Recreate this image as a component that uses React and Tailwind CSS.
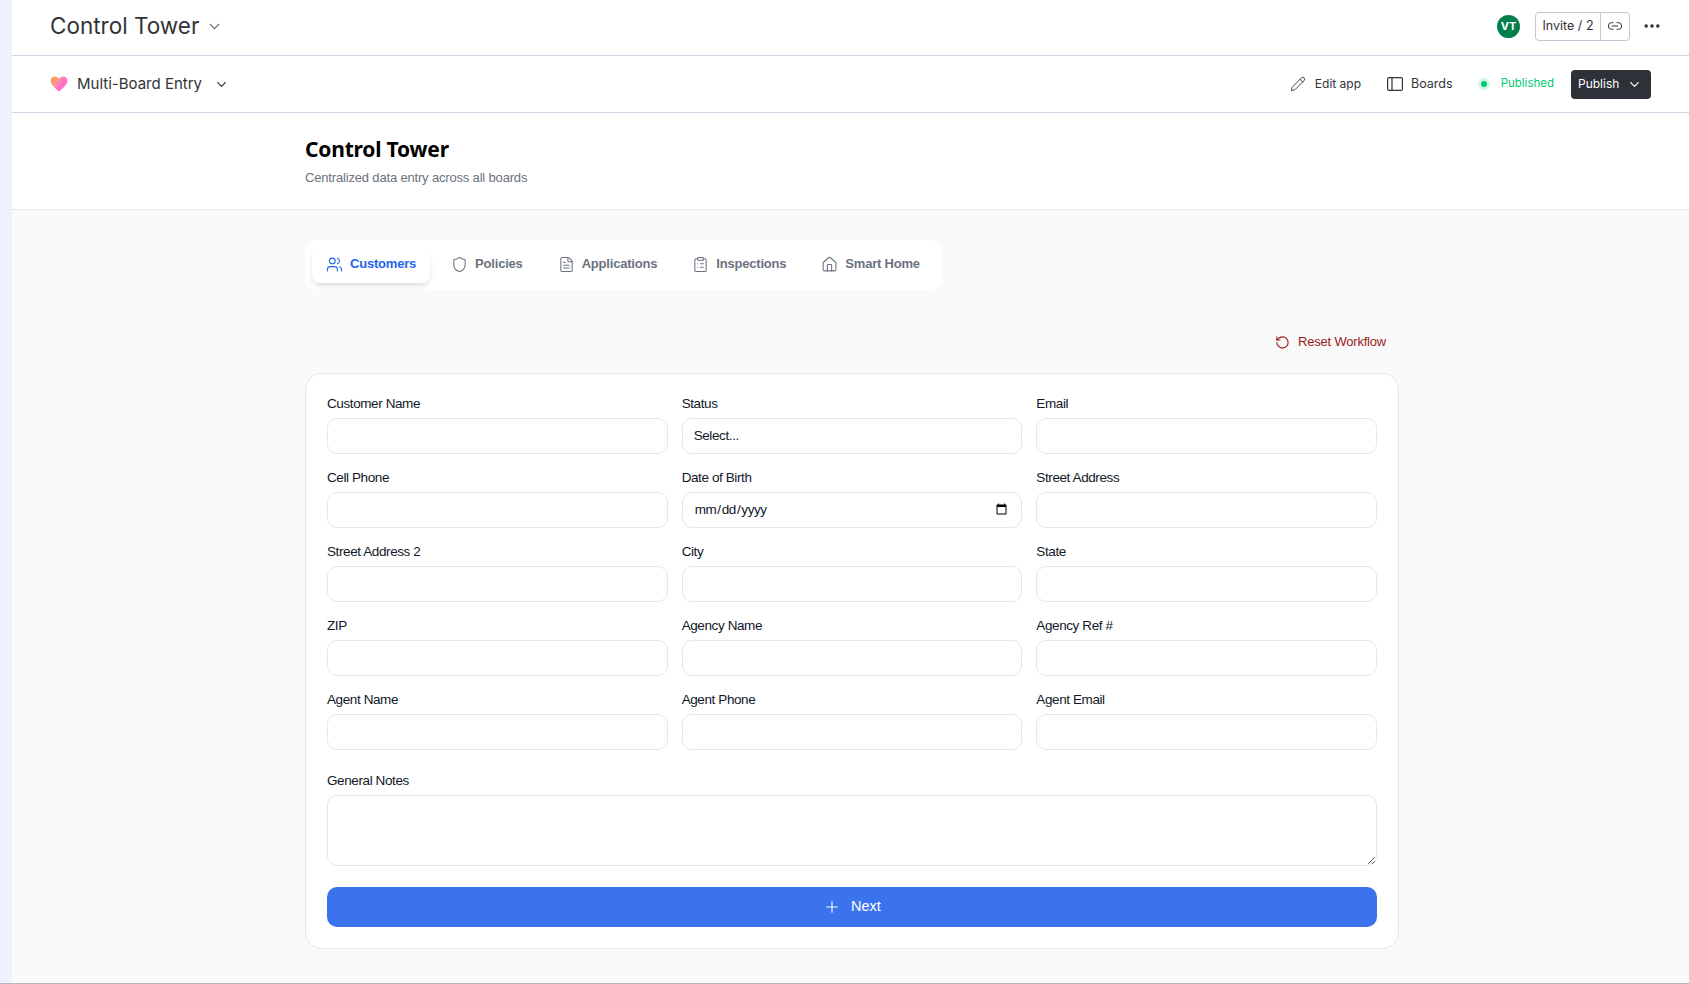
import React from "react";
import {
  ChevronDown,
  Pencil,
  Link2,
  MoreHorizontal,
  Users,
  Shield,
  FileText,
  ClipboardList,
  Home,
  RotateCcw,
  Plus,
} from "lucide-react";

const tabs = [
  { label: "Customers", icon: Users, active: true },
  { label: "Policies", icon: Shield },
  { label: "Applications", icon: FileText },
  { label: "Inspections", icon: ClipboardList },
  { label: "Smart Home", icon: Home },
];

const fields = [
  { label: "Customer Name" },
  { label: "Status", type: "select" },
  { label: "Email" },
  { label: "Cell Phone" },
  { label: "Date of Birth", type: "date" },
  { label: "Street Address" },
  { label: "Street Address 2" },
  { label: "City" },
  { label: "State" },
  { label: "ZIP" },
  { label: "Agency Name" },
  { label: "Agency Ref #" },
  { label: "Agent Name" },
  { label: "Agent Phone" },
  { label: "Agent Email" },
];

const inputClass =
  "w-full h-[36px] px-[11px] bg-white border border-[#e5e7eb] rounded-[10px] text-[13.5px] tracking-[-0.4px] text-[#111827] outline-none";

const labelClass = "h-[18px] text-[13.5px] tracking-[-0.4px] leading-[18px] text-[#111827]";

const Heart = () => (
  <svg width="18" height="16" viewBox="0 0 18 16">
    <defs>
      <linearGradient id="heart" x1="0" y1="0" x2="1" y2="0.7">
        <stop offset="0" stopColor="#ffa726" />
        <stop offset="0.45" stopColor="#ff8fa0" />
        <stop offset="0.7" stopColor="#ff6fc8" />
        <stop offset="1" stopColor="#ff6fd0" />
      </linearGradient>
    </defs>
    <path
      d="M9 15.6C7.2 13.6 .6 9.2.6 4.8.6 2.2 2.5.4 4.7.4 6.5.4 8.2 1.5 9 3.1 9.8 1.5 11.5.4 13.3.4c2.2 0 4.1 1.8 4.1 4.4 0 4.4-6.6 8.8-8.4 10.8z"
      fill="url(#heart)"
    />
  </svg>
);

const BoardsIcon = () => (
  <svg width="16" height="14" viewBox="0 0 16 14" fill="none" stroke="#323338" strokeWidth="1.2">
    <rect x="0.6" y="0.6" width="14.8" height="12.8" rx="1.5" />
    <path d="M5 .6v12.8" />
  </svg>
);

const Field = ({ label, type }) => (
  <div className="flex flex-col">
    <label className={`${labelClass} mb-[5px]`}>{label}</label>
    {type === "select" ? (
      <select className={`${inputClass} appearance-none`}>
        <option>Select...</option>
      </select>
    ) : (
      <input type={type || "text"} className={inputClass} />
    )}
  </div>
);

export default function App() {
  return (
    <div className="flex flex-col h-[984px] overflow-hidden bg-[#fafafa] font-['Liberation_Sans',sans-serif] border-b border-[#b4b9b9]">
      <div className="flex flex-1 min-h-0">
        <div className="w-[12px] shrink-0 bg-[#eff2fe]" />
        <div className="flex-1 min-w-0 flex flex-col">
          {/* top bar */}
          <header className="h-[56px] shrink-0 bg-white border-b border-[#d0d4e4] flex items-center pl-[38px] pr-[27px] pb-[3px] font-['Inter',sans-serif]">
            <span className="text-[22.5px] leading-none text-[#323338]">Control Tower</span>
            <ChevronDown className="ml-[7px] mt-[1px] text-[#676879]" size={17} strokeWidth={1.75} />
            <div className="ml-auto flex items-center">
              <div className="w-[23px] h-[23px] rounded-full bg-[#037f4c] text-white text-[11px] font-bold flex items-center justify-center">
                VT
              </div>
              <div className="ml-[15px] h-[29px] flex border border-[#c3c6d4] rounded-[4px] text-[12.5px] text-[#323338]">
                <span className="w-[65px] flex items-center justify-center border-r border-[#c3c6d4]">Invite / 2</span>
                <span className="w-[28px] flex items-center justify-center">
                  <Link2 size={16} strokeWidth={1.5} />
                </span>
              </div>
              <MoreHorizontal className="ml-[12px] text-[#323338]" size={20} strokeWidth={2.25} />
            </div>
          </header>

          {/* board bar */}
          <div className="h-[57px] shrink-0 bg-white border-b border-[#d0d4e4] flex items-center pl-[38px] pr-[38px] font-['Inter',sans-serif]">
            <Heart />
            <span className="ml-[9px] text-[15px] text-[#323338]">Multi-Board Entry</span>
            <ChevronDown className="ml-[12px] text-[#323338]" size={15} strokeWidth={2} />
            <div className="ml-auto flex items-center text-[12px] text-[#323338]">
              <Pencil size={16} strokeWidth={1.4} />
              <span className="ml-[9px]">Edit app</span>
              <span className="ml-[26px]">
                <BoardsIcon />
              </span>
              <span className="ml-[8px] text-[12.5px]">Boards</span>
              <span className="ml-[25px] w-[12px] h-[12px] rounded-full bg-[#d6f7e8] flex items-center justify-center">
                <span className="w-[6px] h-[6px] rounded-full bg-[#00ca72]" />
              </span>
              <span className="ml-[11px] text-[11.5px] text-[#00ca72]">Published</span>
              <button className="ml-[17px] w-[80px] h-[29px] rounded-[4px] bg-[#2f3138] text-white flex items-center pl-[7px]">
                Publish
                <ChevronDown className="ml-[8px]" size={15} strokeWidth={2} />
              </button>
            </div>
          </div>

          {/* page title */}
          <div className="h-[97px] shrink-0 bg-white border-b border-[#e5e7eb] pl-[293px] pt-[22px]">
            <h1 className="text-[21px] tracking-[-0.2px] leading-[28px] font-bold text-black font-['Noto_Sans',sans-serif]">Control Tower</h1>
            <p className="mt-[6px] text-[13px] tracking-[-0.17px] leading-[18px] text-[#6b7280]">Centralized data entry across all boards</p>
          </div>

          <main className="flex-1 min-h-0 ml-[293px] w-[1094px]">
            <nav className="mt-[30px] w-[637px] h-[50px] bg-white rounded-[12px] flex items-center pl-[7px] gap-[7px]">
              {tabs.map((t) => (
                <div
                  key={t.label}
                  className={`h-[36px] flex items-center gap-[7px] px-[14px] pb-[2px] rounded-[8px] whitespace-nowrap text-[13px] tracking-[-0.2px] font-bold ${
                    t.active ? "bg-white shadow-md text-[#2563eb]" : "text-[#6b7280]"
                  }`}
                >
                  <t.icon size={17} strokeWidth={1.5} />
                  {t.label}
                </div>
              ))}
            </nav>

            <div className="mt-[38px] h-[28px] flex justify-end items-center pr-[13px] gap-[8px] text-[13px] tracking-[-0.2px] text-[#991b1b]">
              <RotateCcw size={15} strokeWidth={1.75} />
              Reset Workflow
            </div>

            <section className="mt-[17px] h-[576px] bg-white border border-[#e5e7eb] rounded-[16px] px-[21px] pt-[21px]">
              <div className="grid grid-cols-3 gap-x-[14px] gap-y-[15px]">
                {fields.map((f) => (
                  <Field key={f.label} {...f} />
                ))}
              </div>
              <label className={`block mt-[22px] mb-[5px] ${labelClass}`}>General Notes</label>
              <textarea className="block w-full h-[71px] bg-white border border-[#e5e7eb] rounded-[10px] outline-none resize-y" />
              <button className="mt-[21px] w-full h-[40px] rounded-[10px] bg-[#3b73ec] text-white text-[14.5px] flex items-center justify-center gap-[10px]">
                <Plus size={18} strokeWidth={1.5} />
                Next
              </button>
            </section>
          </main>
        </div>
      </div>
    </div>
  );
}
